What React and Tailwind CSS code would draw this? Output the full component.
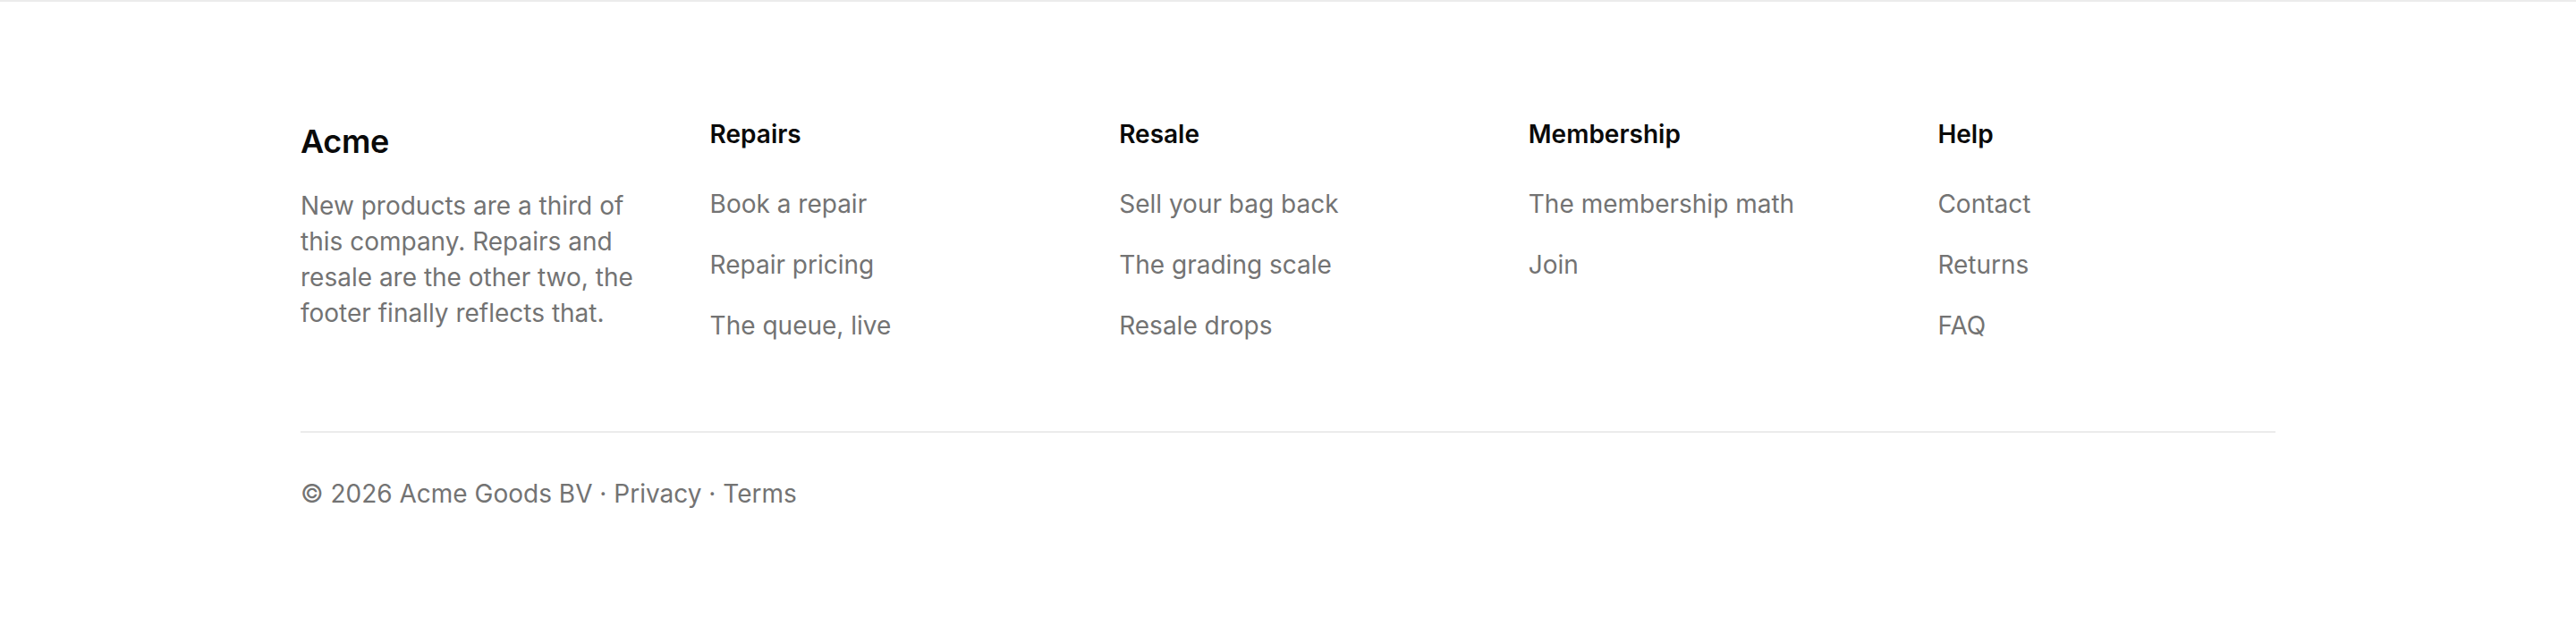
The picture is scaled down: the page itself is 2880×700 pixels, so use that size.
export default function App() {
  const cols = [
    { title: "Repairs", links: ["Book a repair", "Repair pricing", "The queue, live"] },
    { title: "Resale", links: ["Sell your bag back", "The grading scale", "Resale drops"] },
    { title: "Membership", links: ["The membership math", "Join"] },
    { title: "Help", links: ["Contact", "Returns", "FAQ"] },
  ];
  return (
    <div className="min-h-[700px] bg-white" style={{ fontFamily: "Inter, 'Noto Sans', sans-serif" }}>
      <footer className="border-t-2 border-[#ebebeb] bg-white">
        <div className="mx-auto max-w-[2304px] px-[48px] pt-[128px] pb-[128px]">
          <div className="grid grid-cols-5 gap-[80px]">
            <div>
              <div className="text-[36px] leading-[56px] font-semibold tracking-[-0.01em] text-[#0a0a0a]">Acme</div>
              <p className="mt-[24px] text-[28px] leading-[40px] text-[#737373]">
                New products are a third of this company. Repairs and resale are the other two, the footer finally reflects that.
              </p>
            </div>
            {cols.map((c) => (
              <div key={c.title}>
                <div className="text-[28px] leading-[40px] font-semibold text-[#0a0a0a]">{c.title}</div>
                <ul className="mt-[38px] flex flex-col gap-[28px]">
                  {c.links.map((l) => (
                    <li key={l} className="text-[28px] leading-[40px] text-[#737373]">
                      <a href="#">{l}</a>
                    </li>
                  ))}
                </ul>
              </div>
            ))}
          </div>
          <div className="mt-[98px] border-t-2 border-[#ebebeb] pt-[48px] text-[28px] leading-[40px] text-[#737373]">
            © 2026 Acme Goods BV · <a href="#">Privacy</a> · <a href="#">Terms</a>
          </div>
        </div>
      </footer>
    </div>
  );
}
